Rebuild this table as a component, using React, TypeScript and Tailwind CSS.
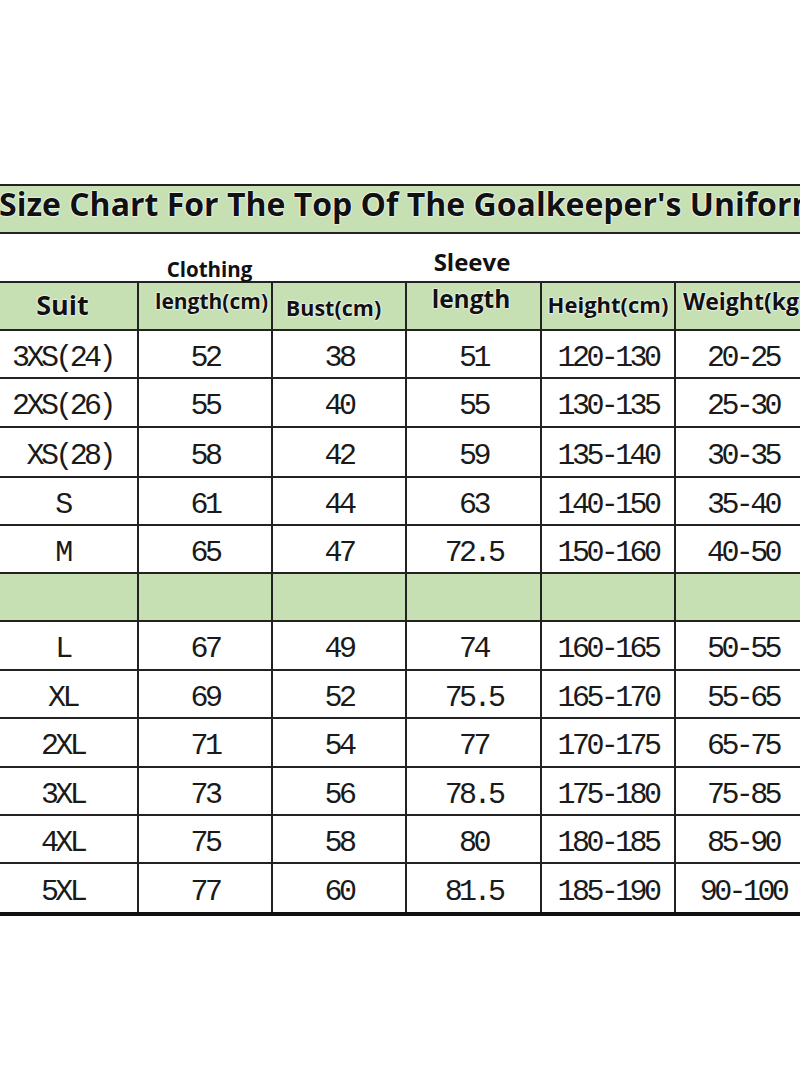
import React from 'react';

const grid = 'grid grid-cols-[151px_134px_134px_135px_134px_134px]';
const halo = '[text-shadow:0_0_2px_#fff,0_0_2px_#fff,0_0_1px_#fff]';
const sans = "font-['Open_Sans','Noto_Sans',sans-serif] font-bold text-[#111]";
const mono = "font-['Liberation_Mono','DejaVu_Sans_Mono',monospace] text-[30px] tracking-[-3.6px] leading-none text-[#1a1a1a]";

type Row = { cells: string[] | null; h: string };

const rows: Row[] = [
  { cells: ['3XS(24)', '52', '38', '51', '120-130', '20-25'], h: 'h-[48px]' },
  { cells: ['2XS(26)', '55', '40', '55', '130-135', '25-30'], h: 'h-[49px]' },
  { cells: ['\u00a0XS(28)', '58', '42', '59', '135-140', '30-35'], h: 'h-[50px]' },
  { cells: ['S', '61', '44', '63', '140-150', '35-40'], h: 'h-[48px]' },
  { cells: ['M', '65', '47', '72.5', '150-160', '40-50'], h: 'h-[48px]' },
  { cells: null, h: 'h-[48px]' },
  { cells: ['L', '67', '49', '74', '160-165', '50-55'], h: 'h-[49px]' },
  { cells: ['XL', '69', '52', '75.5', '165-170', '55-65'], h: 'h-[48px]' },
  { cells: ['2XL', '71', '54', '77', '170-175', '65-75'], h: 'h-[49px]' },
  { cells: ['3XL', '73', '56', '78.5', '175-180', '75-85'], h: 'h-[48px]' },
  { cells: ['4XL', '75', '58', '80', '180-185', '85-90'], h: 'h-[48px]' },
];

const lastRow = ['5XL', '77', '60', '81.5', '185-190', '90-100'];

function Cell({ text, last, green }: { text?: string; last?: boolean; green?: boolean }) {
  return (
    <div
      className={`flex items-center justify-center pt-[7px] border-b-2 border-[#222] ${last ? '' : 'border-r-2'} ${green ? 'bg-[#c6e0b4]' : 'bg-white'}`}
    >
      {text && <span className={`${mono} whitespace-pre`}>{text}</span>}
    </div>
  );
}

export default function App() {
  return (
    <div className="w-[800px] h-[1090px] overflow-hidden bg-white">
      <div className="ml-[-12px] w-[822px] pt-[184px]">
        {/* title band */}
        <div className="h-[50px] border-y-2 border-[#222] bg-[#c6e0b4] pl-[11px] pt-[2px]">
          <span className={`${sans} ${halo} text-[32px] leading-none whitespace-nowrap block`}>
            Size Chart For The Top Of The Goalkeeper's Uniform
          </span>
        </div>

        {/* labels above header */}
        <div className={`${grid} h-[47px]`}>
          <div />
          <div className="flex items-end justify-center pb-[2px] pl-[7px]">
            <span className={`${sans} text-[20.5px] leading-none`}>Clothing</span>
          </div>
          <div />
          <div className="flex items-end justify-center pb-[7px] pr-[5px]">
            <span className={`${sans} text-[24px] leading-none`}>Sleeve</span>
          </div>
          <div />
          <div />
        </div>

        {/* header row */}
        <div className={`${grid} h-[50px] border-t-2 border-[#222]`}>
          <div className="flex items-center justify-center pb-[4px] border-r-2 border-b-2 border-[#222] bg-[#c6e0b4]">
            <span className={`${sans} ${halo} text-[27px] leading-none`}>Suit</span>
          </div>
          <div className="flex items-center justify-center pb-[10px] pl-[13px] border-r-2 border-b-2 border-[#222] bg-[#c6e0b4]">
            <span className={`${sans} ${halo} text-[21px] leading-none whitespace-nowrap`}>length(cm)</span>
          </div>
          <div className="flex items-center justify-center pt-[3px] pr-[11px] border-r-2 border-b-2 border-[#222] bg-[#c6e0b4]">
            <span className={`${sans} ${halo} text-[21.5px] leading-none whitespace-nowrap`}>Bust(cm)</span>
          </div>
          <div className="flex items-center justify-center pb-[13px] pr-[5px] border-r-2 border-b-2 border-[#222] bg-[#c6e0b4]">
            <span className={`${sans} ${halo} text-[24.5px] leading-none`}>length</span>
          </div>
          <div className="flex items-center justify-center pb-[5px] border-r-2 border-b-2 border-[#222] bg-[#c6e0b4]">
            <span className={`${sans} ${halo} text-[22px] leading-none whitespace-nowrap`}>Height(cm)</span>
          </div>
          <div className="flex items-center justify-start pb-[10px] pl-[7px] border-b-2 border-[#222] bg-[#c6e0b4]">
            <span className={`${sans} ${halo} text-[23px] leading-none whitespace-nowrap`}>Weight(kg)</span>
          </div>
        </div>

        {/* data rows */}
        {rows.map((row, i) => (
          <div key={i} className={`${grid} ${row.h}`}>
            {row.cells
              ? row.cells.map((c, j) => <Cell key={j} text={c} last={j === 5} />)
              : [0, 1, 2, 3, 4, 5].map((j) => <Cell key={j} green last={j === 5} />)}
          </div>
        ))}

        <div className={`${grid} h-[52px] border-b-[4px] border-[#111]`}>
          {lastRow.map((c, j) => (
            <div
              key={j}
              className={`flex items-center justify-center pt-[7px] border-[#222] ${j === 5 ? '' : 'border-r-2'}`}
            >
              <span className={`${mono} whitespace-pre`}>{c}</span>
            </div>
          ))}
        </div>
      </div>
    </div>
  );
}
